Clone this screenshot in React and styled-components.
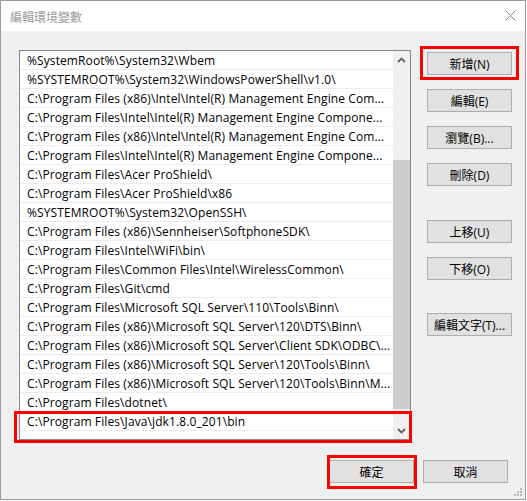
import React from 'react';
import styled, { createGlobalStyle } from 'styled-components';

const GlobalStyle = createGlobalStyle`
  html, body {
    margin: 0;
    padding: 0;
    background: #ffffff;
  }
  body {
    font-family: "Open Sans", "Noto Sans CJK TC", sans-serif;
    font-size: 12px;
  }
`;

const Window = styled.div`
  width: 526px;
  height: 500px;
  box-sizing: border-box;
  border: 1px solid #9a9a9a;
  background: #f0f0f0;
  display: flex;
  flex-direction: column;
  position: relative;
`;

const TitleBar = styled.div`
  height: 30px;
  flex: none;
  background: #ffffff;
  display: flex;
  align-items: center;
  justify-content: space-between;
  padding: 0 9px 0 9px;
`;

const Title = styled.span`
  font-family: "Noto Sans CJK TC", sans-serif;
  font-size: 12px;
  color: #9b9b9b;
`;

const CloseIcon = styled.svg`
  width: 11px;
  height: 11px;
  margin-top: -1px;
`;

const Body = styled.div`
  flex: 1;
  display: flex;
  flex-direction: column;
  padding: 19px 0 0 18px;
`;

const Main = styled.div`
  display: flex;
  align-items: flex-start;
`;

const ListFrame = styled.div`
  position: relative;
  width: 392px;
  height: 390px;
  box-sizing: border-box;
  border: 1px solid #828790;
  background: #ffffff;
  display: flex;
`;

const Rows = styled.div`
  flex: 1;
  display: flex;
  flex-direction: column;
`;

const Row = styled.div`
  height: 19px;
  box-sizing: border-box;
  border-bottom: 1px solid #ececec;
  padding-left: 7px;
  display: flex;
  align-items: center;
  white-space: nowrap;
  overflow: hidden;
  color: #000000;
  font-size: 12px;
  letter-spacing: 0.1px;
`;

const Scrollbar = styled.div`
  width: 17px;
  flex: none;
  background: #f0f0f0;
  display: flex;
  flex-direction: column;
`;

const Arrow = styled.div`
  height: 17px;
  flex: none;
  display: flex;
  align-items: center;
  justify-content: center;
`;

const Track = styled.div`
  flex: 1;
  display: flex;
  flex-direction: column;
`;

const Thumb = styled.div`
  background: #cdcdcd;
  margin-top: ${(p) => p.$top}px;
  height: ${(p) => p.$height}px;
`;

const Highlight = styled.div`
  position: absolute;
  left: -6px;
  right: -2px;
  top: 360px;
  bottom: -4px;
  border: 3px solid #ff0000;
  pointer-events: none;
`;

const Side = styled.div`
  display: flex;
  flex-direction: column;
  margin-left: 16px;
  padding-top: 2px;
`;

const Button = styled.button`
  position: relative;
  width: 85px;
  height: 23px;
  box-sizing: border-box;
  border: 1px solid #adadad;
  background: #e1e1e1;
  color: #000000;
  font-family: "Open Sans", "Noto Sans CJK TC", sans-serif;
  font-size: 12px;
  padding: 0;
  margin-top: ${(p) => p.$gap || 0}px;
  display: flex;
  align-items: center;
  justify-content: center;

  &::after {
    content: '';
    display: ${(p) => (p.$mark ? 'block' : 'none')};
    position: absolute;
    inset: ${(p) => p.$mark || '0'};
    border: 3px solid #ff0000;
  }
`;

const Footer = styled.div`
  display: flex;
  justify-content: flex-end;
  gap: 9px;
  margin-top: 20px;
  padding-right: 17px;
`;

const Grip = styled.svg`
  position: absolute;
  right: 2px;
  bottom: 2px;
  width: 10px;
  height: 10px;
`;

const paths = [
  '%SystemRoot%\\System32\\Wbem',
  '%SYSTEMROOT%\\System32\\WindowsPowerShell\\v1.0\\',
  'C:\\Program Files (x86)\\Intel\\Intel(R) Management Engine Com...',
  'C:\\Program Files\\Intel\\Intel(R) Management Engine Compone...',
  'C:\\Program Files (x86)\\Intel\\Intel(R) Management Engine Com...',
  'C:\\Program Files\\Intel\\Intel(R) Management Engine Compone...',
  'C:\\Program Files\\Acer ProShield\\',
  'C:\\Program Files\\Acer ProShield\\x86',
  '%SYSTEMROOT%\\System32\\OpenSSH\\',
  'C:\\Program Files (x86)\\Sennheiser\\SoftphoneSDK\\',
  'C:\\Program Files\\Intel\\WiFi\\bin\\',
  'C:\\Program Files\\Common Files\\Intel\\WirelessCommon\\',
  'C:\\Program Files\\Git\\cmd',
  'C:\\Program Files\\Microsoft SQL Server\\110\\Tools\\Binn\\',
  'C:\\Program Files (x86)\\Microsoft SQL Server\\120\\DTS\\Binn\\',
  'C:\\Program Files (x86)\\Microsoft SQL Server\\Client SDK\\ODBC\\...',
  'C:\\Program Files (x86)\\Microsoft SQL Server\\120\\Tools\\Binn\\',
  'C:\\Program Files (x86)\\Microsoft SQL Server\\120\\Tools\\Binn\\M...',
  'C:\\Program Files\\dotnet\\',
  'C:\\Program Files\\Java\\jdk1.8.0_201\\bin',
];

const Chevron = ({ up }) => (
  <svg width="9" height="6" viewBox="0 0 9 6">
    <path
      d={up ? 'M1 5 L4.5 1.5 L8 5' : 'M1 1 L4.5 4.5 L8 1'}
      fill="none"
      stroke="#606060"
      strokeWidth="1.8"
    />
  </svg>
);

export default function App() {
  return (
    <>
      <GlobalStyle />
      <Window>
        <TitleBar>
          <Title>編輯環境變數</Title>
          <CloseIcon viewBox="0 0 11 11">
            <path d="M0.5 0.5 L10.5 10.5 M10.5 0.5 L0.5 10.5" stroke="#8c8c8c" strokeWidth="1" />
          </CloseIcon>
        </TitleBar>
        <Body>
          <Main>
            <ListFrame>
              <Rows>
                {paths.map((p, i) => (
                  <Row key={i}>{p}</Row>
                ))}
              </Rows>
              <Scrollbar>
                <Arrow><Chevron up /></Arrow>
                <Track>
                  <Thumb $top={92} $height={249} />
                </Track>
                <Arrow><Chevron /></Arrow>
              </Scrollbar>
              <Highlight />
            </ListFrame>
            <Side>
              <Button $mark="-7px -8px -6px -8px">新增(N)</Button>
              <Button $gap={14}>編輯(E)</Button>
              <Button $gap={14}>瀏覽(B)...</Button>
              <Button $gap={14}>刪除(D)</Button>
              <Button $gap={34}>上移(U)</Button>
              <Button $gap={14}>下移(O)</Button>
              <Button $gap={33}>編輯文字(T)...</Button>
            </Side>
          </Main>
          <Footer>
            <Button $mark="-6px -4px -7px -3px">確定</Button>
            <Button>取消</Button>
          </Footer>
        </Body>
        <Grip viewBox="0 0 10 10">
          <rect x="7" y="1" width="2" height="2" fill="#b8b8b8" />
          <rect x="4" y="4" width="2" height="2" fill="#b8b8b8" />
          <rect x="7" y="4" width="2" height="2" fill="#b8b8b8" />
          <rect x="1" y="7" width="2" height="2" fill="#b8b8b8" />
          <rect x="4" y="7" width="2" height="2" fill="#b8b8b8" />
          <rect x="7" y="7" width="2" height="2" fill="#b8b8b8" />
        </Grip>
      </Window>
    </>
  );
}
